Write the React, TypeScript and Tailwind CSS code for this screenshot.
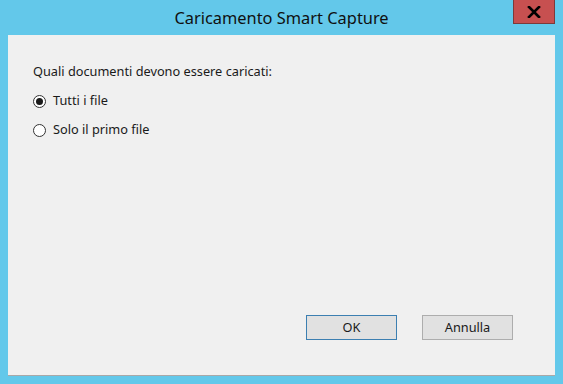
import React from "react";

export default function App() {
  return (
    <div className="w-[563px] h-[384px] bg-[#63c8ea] flex flex-col overflow-hidden" style={{ fontFamily: '"Noto Sans", "DejaVu Sans", sans-serif' }}>
      <div className="relative h-[35px] flex items-center justify-center shrink-0">
        <span className="text-[16.4px] text-[#101010] leading-none mt-[1px]">Caricamento Smart Capture</span>
        <div className="absolute left-[513px] top-[-1px] w-[42px] h-[25px] bg-[#c75050] border border-[#7d3a3a] flex items-center justify-center">
          <svg width="14" height="12" viewBox="0 0 14 12">
            <path d="M2 1 L12 11 M12 1 L2 11" stroke="#000" strokeWidth="2.6" strokeLinecap="square" />
          </svg>
        </div>
      </div>
      <div className="mx-[8px] h-[341px] bg-[#f0f0f0] border-b border-[#a8a8a8] flex flex-col pl-[25px] pr-[42px] pb-[35px]">
        <div className="mt-[28px] text-[12.75px] leading-[16px] text-[#1a1a1a]">Quali documenti devono essere caricati:</div>
        <label className="mt-[14px] flex items-center h-[16px] text-[12.75px] text-[#1a1a1a]">
          <span className="w-[13px] h-[13px] rounded-full border border-[#333] bg-white flex items-center justify-center mr-[7px]">
            <span className="w-[7px] h-[7px] rounded-full bg-[#1a1a1a]" />
          </span>
          Tutti i file
        </label>
        <label className="mt-[13px] flex items-center h-[16px] text-[12.75px] text-[#1a1a1a]">
          <span className="w-[13px] h-[13px] rounded-full border border-[#333] bg-white mr-[7px]" />
          Solo il primo file
        </label>
        <div className="mt-auto flex justify-end gap-[25px]">
          <button className="w-[91px] h-[25px] bg-[#e1e1e1] border border-[#3c7fb1] text-[12.75px] text-[#1a1a1a]">OK</button>
          <button className="w-[91px] h-[25px] bg-[#e1e1e1] border border-[#adadad] text-[12.75px] text-[#1a1a1a]">Annulla</button>
        </div>
      </div>
    </div>
  );
}
